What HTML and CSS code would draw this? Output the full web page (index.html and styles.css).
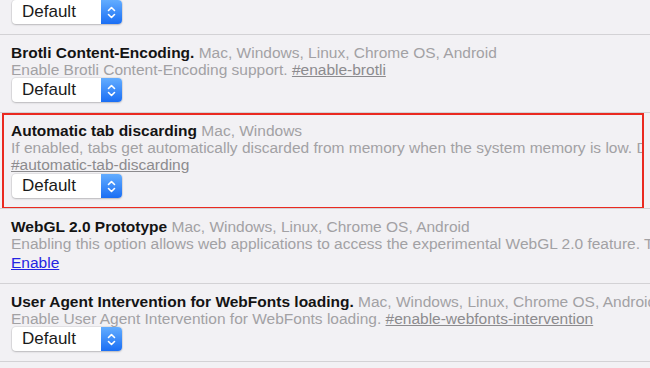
FILE: index.html
```html
<!DOCTYPE html>
<html lang="en">
<head>
    <meta charset="UTF-8">
    <meta name="viewport" content="width=device-width, initial-scale=1.0">
    <title>Experiments</title>
    <link rel="stylesheet" href="styles.css">
</head>
<body>
    <div class="experiments">
        <!-- tail of the previous experiment -->
        <div class="experiment first">
            <div class="select"><span class="select-value">Default</span><span class="select-arrow"><svg width="9" height="13" viewBox="0 0 9 13"><path d="M1.5 4.5 L4.5 1.5 L7.5 4.5 M1.5 8.5 L4.5 11.5 L7.5 8.5" fill="none" stroke="#fff" stroke-width="1.6" stroke-linecap="round" stroke-linejoin="round"/></svg></span></div>
        </div>

        <div class="experiment">
            <div class="title"><span class="name">Brotli Content-Encoding.</span> <span class="platforms">Mac, Windows, Linux, Chrome OS, Android</span></div>
            <div class="desc">Enable Brotli Content-Encoding support. <a class="permalink" href="#enable-brotli">#enable-brotli</a></div>
            <div class="select"><span class="select-value">Default</span><span class="select-arrow"><svg width="9" height="13" viewBox="0 0 9 13"><path d="M1.5 4.5 L4.5 1.5 L7.5 4.5 M1.5 8.5 L4.5 11.5 L7.5 8.5" fill="none" stroke="#fff" stroke-width="1.6" stroke-linecap="round" stroke-linejoin="round"/></svg></span></div>
        </div>

        <div class="experiment highlighted">
            <div class="title"><span class="name">Automatic tab discarding</span> <span class="platforms">Mac, Windows</span></div>
            <div class="desc clipped">If enabled, tabs get automatically discarded from memory when the system memory is low. D</div>
            <div class="desc"><a class="permalink" href="#automatic-tab-discarding">#automatic-tab-discarding</a></div>
            <div class="select"><span class="select-value">Default</span><span class="select-arrow"><svg width="9" height="13" viewBox="0 0 9 13"><path d="M1.5 4.5 L4.5 1.5 L7.5 4.5 M1.5 8.5 L4.5 11.5 L7.5 8.5" fill="none" stroke="#fff" stroke-width="1.6" stroke-linecap="round" stroke-linejoin="round"/></svg></span></div>
        </div>

        <div class="experiment">
            <div class="title"><span class="name">WebGL 2.0 Prototype</span> <span class="platforms">Mac, Windows, Linux, Chrome OS, Android</span></div>
            <div class="desc">Enabling this option allows web applications to access the experimental WebGL 2.0 feature. T</div>
            <div class="action"><a class="enable-link" href="#">Enable</a></div>
        </div>

        <div class="experiment">
            <div class="title"><span class="name">User Agent Intervention for WebFonts loading.</span> <span class="platforms">Mac, Windows, Linux, Chrome OS, Android</span></div>
            <div class="desc">Enable User Agent Intervention for WebFonts loading. <a class="permalink" href="#enable-webfonts-intervention">#enable-webfonts-intervention</a></div>
            <div class="select"><span class="select-value">Default</span><span class="select-arrow"><svg width="9" height="13" viewBox="0 0 9 13"><path d="M1.5 4.5 L4.5 1.5 L7.5 4.5 M1.5 8.5 L4.5 11.5 L7.5 8.5" fill="none" stroke="#fff" stroke-width="1.6" stroke-linecap="round" stroke-linejoin="round"/></svg></span></div>
        </div>

        <div class="experiment last"></div>
    </div>
</body>
</html>
```

FILE: styles.css
```css
body {
    margin: 0;
    padding: 0;
    background-color: #f2f1f4;
    font-family: "Liberation Sans", Arial, sans-serif;
    font-size: 15.5px;
    color: #111;
    overflow: hidden;
}

.experiments {
    width: 650px;
}

.experiment {
    position: relative;
    padding: 9px 0 10px 11px;
    border-top: 1px solid #d3d2d5;
}

.experiment.first {
    padding-top: 0;
    border-top: none;
}

.experiment.last {
    padding: 0;
}

/* red marker drawn round the selected experiment */
.experiment.highlighted::after {
    content: "";
    position: absolute;
    top: 0;
    bottom: -1px;
    left: 2px;
    right: 6px;
    border: 2px solid #ea2a20;
}

.title,
.desc {
    line-height: 17px;
    white-space: nowrap;
}

.desc.clipped {
    width: 633px;
    overflow: hidden;
}

.name {
    font-weight: bold;
    color: #141414;
}

.platforms,
.desc {
    color: #a2a1a4;
}

.permalink {
    color: #8c8b8e;
    text-decoration: underline;
}

.action {
    height: 21px;
    line-height: 22px;
}

.enable-link {
    color: #2424e2;
    text-decoration: underline;
}

.select {
    display: flex;
    width: 110px;
    height: 24px;
    margin-left: 1px;
    background-color: #fff;
    border-radius: 4px;
    box-shadow: 0 0 0 1px rgba(0, 0, 0, 0.06), 0 1px 2px rgba(0, 0, 0, 0.18);
    overflow: hidden;
}

.highlighted .select {
    margin-top: 1px;
}

.select-value {
    flex: 1;
    padding-left: 10px;
    font-size: 17px;
    line-height: 24px;
    color: #1a1a1a;
}

.select-arrow {
    display: flex;
    align-items: center;
    justify-content: center;
    width: 21px;
    background: linear-gradient(#63adff, #1a6ef4);
}
```
